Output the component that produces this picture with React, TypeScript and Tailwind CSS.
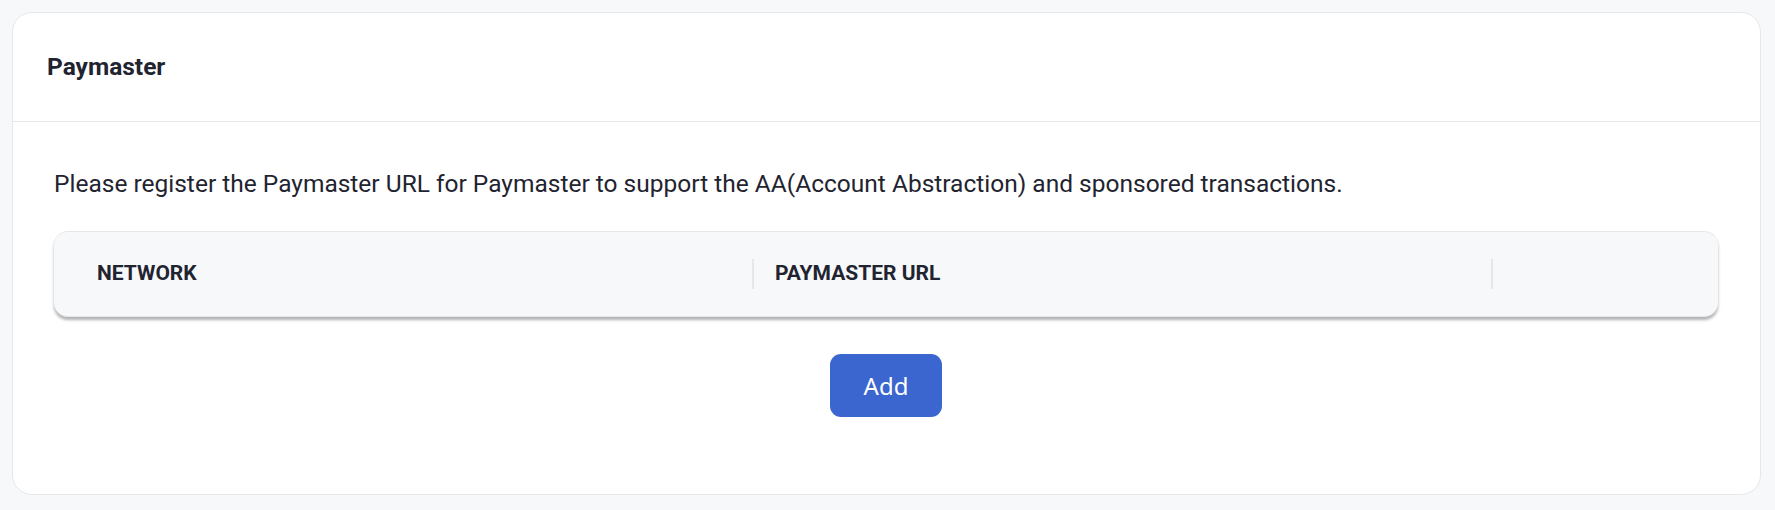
export default function App() {
  return (
    <div className="min-h-[510px] w-full bg-[#f7f8fa] py-3 pl-3 pr-[14px] font-['Roboto',sans-serif] text-[#1f2430]">
      <div className="h-[483px] rounded-[20px] border border-[#e5e7eb] bg-white">
        <div className="flex h-[109px] items-center border-b border-[#e5e7eb] px-[34px]">
          <h2 className="text-[24.5px] font-bold">Paymaster</h2>
        </div>
        <div className="pl-[41px] pr-[42px] pt-[47px]">
          <p className="text-[24.5px] leading-[29px]">
            Please register the Paymaster URL for Paymaster to support the AA(Account Abstraction) and sponsored
            transactions.
          </p>
          <div className="mt-[33px] grid h-[86px] grid-cols-[700px_739px_1fr] items-center rounded-[14px] border-t border-b border-[#e5e7eb] bg-[#f7f8fa] shadow-[0_3px_3px_rgba(0,0,0,0.3)]">
            <div className="flex h-[30px] items-center border-r-2 border-[#e5e7eb] pl-[43px] text-[21px] font-bold">
              NETWORK
            </div>
            <div className="flex h-[30px] items-center border-r-2 border-[#e5e7eb] pl-[21px] text-[21px] font-bold">
              PAYMASTER URL
            </div>
            <div />
          </div>
          <div className="mt-[37px] flex justify-center">
            <button className="h-[63px] w-[112px] rounded-[11px] bg-[#3b66d0] font-['Noto_Sans',sans-serif] text-[24px] text-white">
              Add
            </button>
          </div>
        </div>
      </div>
    </div>
  );
}
